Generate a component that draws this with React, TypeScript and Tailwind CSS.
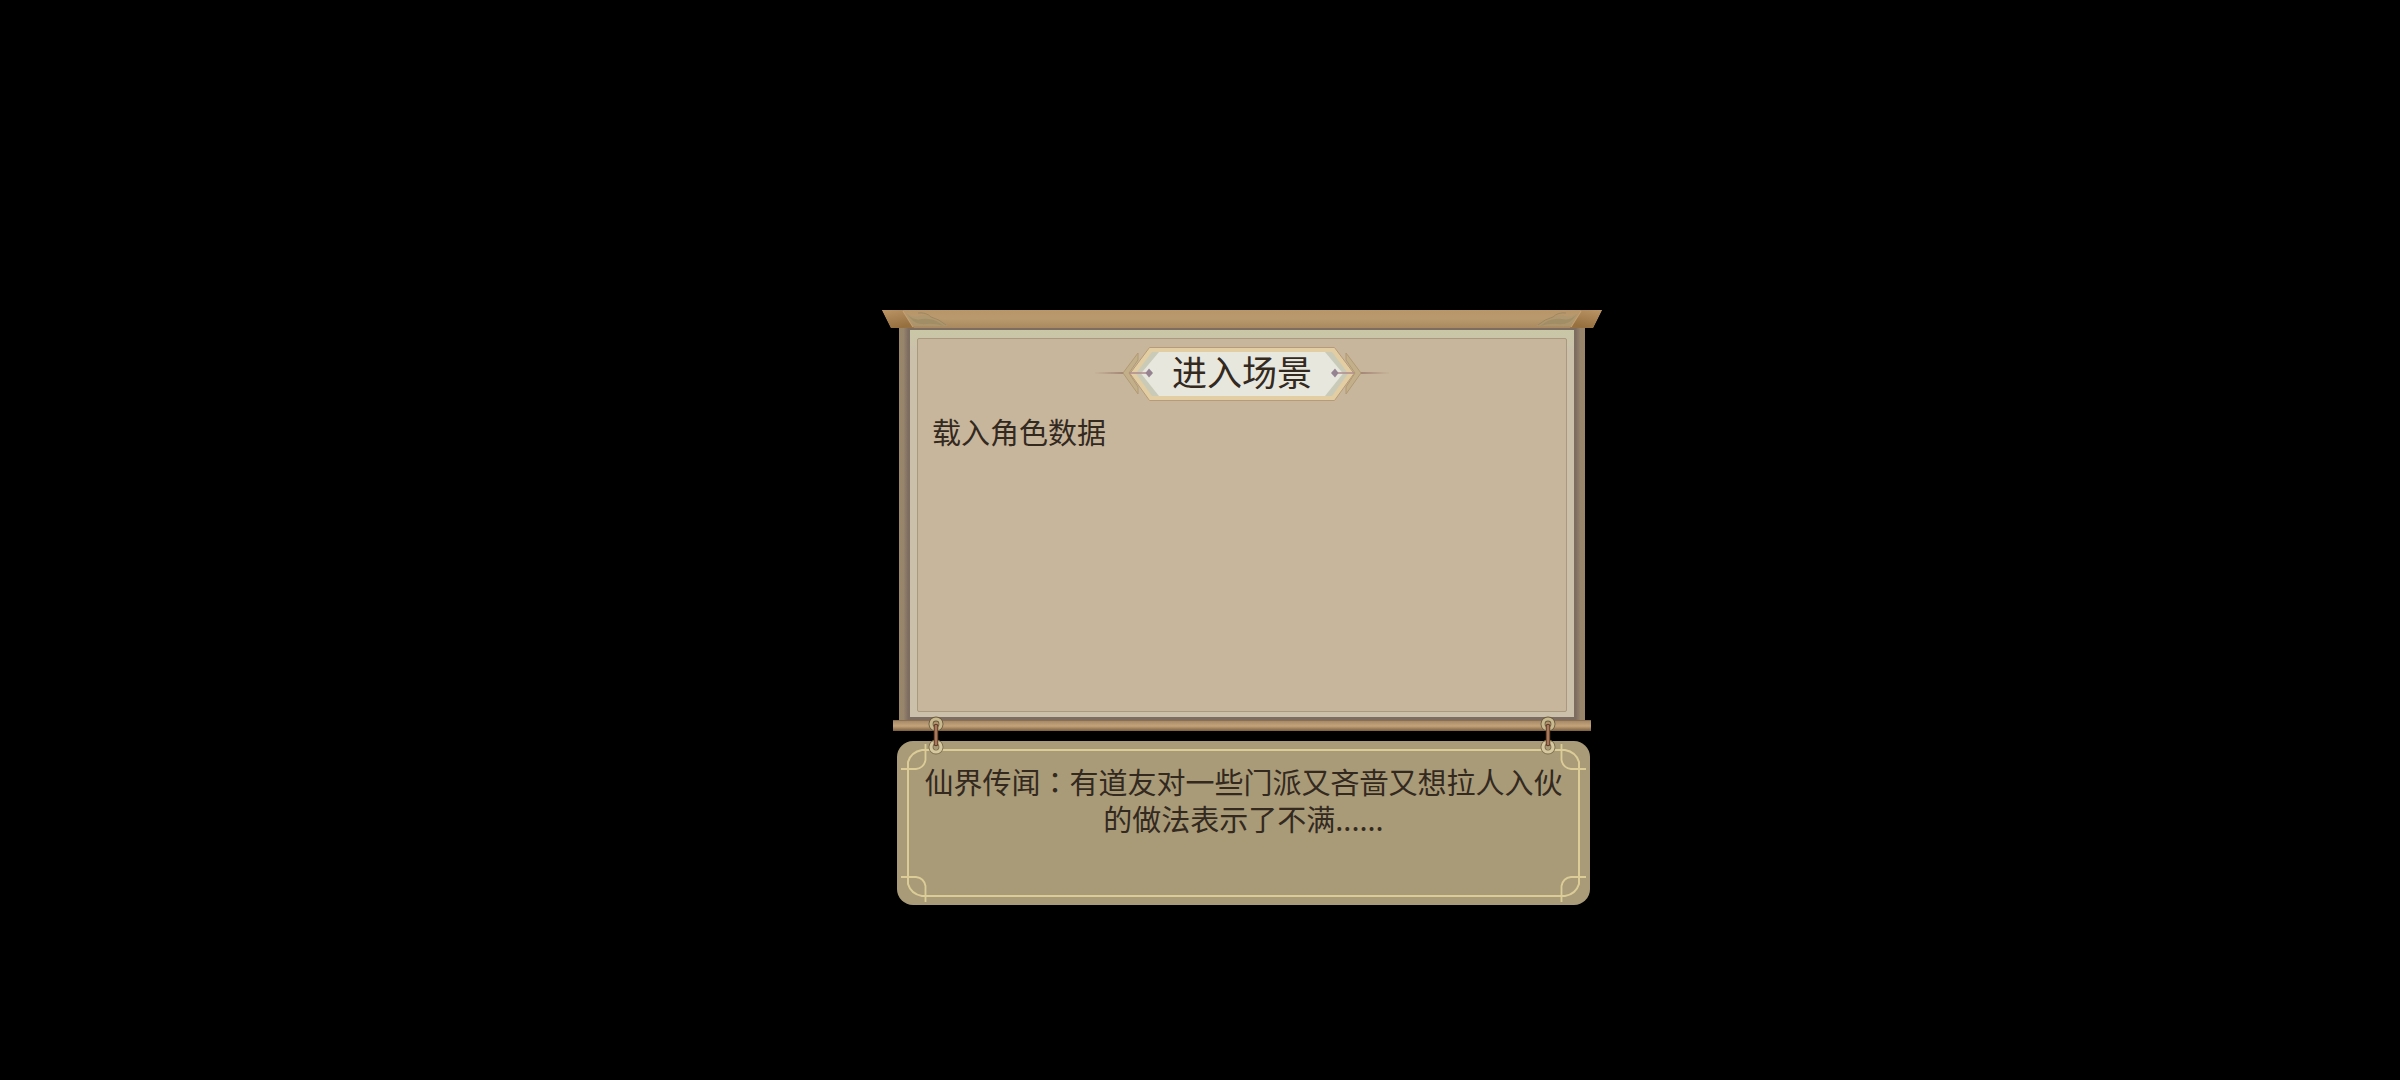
const tip = {
    label: '仙界传闻',
    text: '有道友对一些门派又吝啬又想拉人入伙的做法表示了不满......',
};

// Carved end of the roof beam, drawn for the left side
function BeamEnd({ className = '' }: { className?: string }) {
    return (
        <svg viewBox="0 0 72 18" className={`h-[18px] w-[72px] ${className}`} aria-hidden="true">
            <defs>
                <linearGradient id="wood" x1="0" y1="0" x2="0.4" y2="1">
                    <stop offset="0" stopColor="#bb9566" />
                    <stop offset="1" stopColor="#96703f" />
                </linearGradient>
            </defs>
            <path d="M22 1 Q29 9 38 6 Q44 4 50 8 Q59 11 66 16 L31 16 Z" fill="#ab9770" opacity="0.7" />
            <path d="M25 4 Q31 11 40 9 Q49 8 56 12 L62 16 Q52 13 44 14 Q34 15 29 9 Z" fill="#8f8159" opacity="0.4" />
            <path d="M36 3 Q44 2 49 7 Q57 9 64 15" fill="none" stroke="#93825b" strokeWidth="1" opacity="0.7" />
            <path d="M0 0 H21 L32 18 H9 Z" fill="url(#wood)" />
            <path d="M21 1 L31 17" stroke="#c3a175" strokeWidth="1.2" />
        </svg>
    );
}

// Frame corner of the tip card, drawn for the top left
function CardCorner({ className = '' }: { className?: string }) {
    return (
        <svg viewBox="0 0 30 30" className={`size-[30px] ${className}`} fill="none" stroke="#dccd98" strokeWidth="2" aria-hidden="true">
            <path d="M11 30 V21 Q14 11 25 9 H30" />
            <path d="M28.500 3 V19 Q27 27 19 28 H4" strokeWidth="1.8" />
        </svg>
    );
}

function Ring() {
    return (
        <svg viewBox="0 0 16 40" className="h-10 w-4" fill="none" aria-hidden="true">
            <circle cx="8" cy="8" r="5" stroke="#6b5c40" strokeWidth="5" />
            <circle cx="8" cy="8" r="5" stroke="#c8ba8e" strokeWidth="3.2" />
            <circle cx="8" cy="31" r="5" stroke="#7d6c4c" strokeWidth="5" />
            <circle cx="8" cy="31" r="5" stroke="#d6c99f" strokeWidth="3.2" />
            <path d="M8 10 V28" stroke="#5a3824" strokeWidth="4.500" strokeLinecap="round" />
            <path d="M8 10 V28" stroke="#a9785a" strokeWidth="2.6" strokeLinecap="round" />
        </svg>
    );
}

// One end of the title plate, drawn for the left side
function PlateEnd({ className = '' }: { className?: string }) {
    return (
        <svg viewBox="0 0 70 54" className={`h-[54px] w-[70px] shrink-0 ${className}`} fill="none" aria-hidden="true">
            <path d="M0 26 L36 25 V27 Z" fill="#9c7c70" />
            <path d="M44 6 L29 26 L44 47 V40 L35 26 L44 13 Z" fill="#c3af89" stroke="#b09a75" strokeWidth="1" />
            <path d="M70 0.500 H55.500 L36 26.500 L55.500 53.500 H70" fill="#e3cda2" stroke="#b79a78" strokeWidth="1" />
            <path d="M70 5 H58 L42 26.500 L58 49 H70 Z" fill="#c9cbb8" />
            <path d="M70 5 H65 L47 26.500 L65 49 H70 Z" fill="#e7e7de" />
            <path d="M36 26 H53" stroke="#b28f90" strokeWidth="1.6" />
            <path d="M55 21.500 L59 26 L55 30.500 L51.500 26 Z" fill="#958391" />
        </svg>
    );
}

export default function App() {
    return (
        <main className="flex min-h-screen items-center justify-center bg-black pt-[135px] pl-[84px] font-['Noto_Sans_CJK_SC',sans-serif] text-[#33291f]" lang="zh-CN">
            <div className="flex w-full max-w-[720px] flex-col">
                {/* Roof beam */}
                <div className="flex h-[18px] justify-between bg-linear-to-b from-[#b8966a] via-[#b8996d] to-[#a98a60] [clip-path:polygon(0_0,100%_0,calc(100%-9px)_100%,9px_100%)]">
                    <BeamEnd />
                    <BeamEnd className="-scale-x-100" />
                </div>

                {/* Board between its two posts */}
                <div className="mx-[17px] flex">
                    <div className="w-[9px] bg-linear-to-r from-[#9a8768] via-[#97856c] to-[#7f6d62]" />
                    <section className="flex-1 border-x-2 border-t-2 border-b-3 border-[#7d6c60] bg-linear-to-b from-[#c9c7a6] via-[#cbc1ab] via-5% to-[#cbc1ab] px-[7px] pt-2 pb-[5px]">
                        <div className="min-h-[374px] rounded-xs border border-[#a8997f] bg-[#c7b69b] px-[14px] pt-2">
                            <div className="flex items-center justify-center">
                                <PlateEnd />
                                <h1 className="h-[54px] border-y border-[#b79a78] bg-[#e7e7de] px-2 text-[35px] leading-[46px] whitespace-nowrap shadow-[inset_0_4px_0_#e3cda2,inset_0_-4px_0_#e3cda2]">进入场景</h1>
                                <PlateEnd className="-scale-x-100" />
                            </div>
                            <p className="mt-[10px] text-[29px] leading-[40px]">载入角色数据</p>
                        </div>
                    </section>
                    <div className="w-[9px] bg-linear-to-l from-[#9a8768] via-[#97856c] to-[#7f6d62]" />
                </div>

                {/* Lower rail, the rings lie over it and the card */}
                <div className="relative mx-[11px] h-[11px] border-t border-[#8a7050] bg-linear-to-b from-[#a68a68] via-[#c4a47a] to-[#7c5f40]">
                    <div className="absolute inset-x-[35px] -top-[5px] z-10 flex justify-between">
                        <Ring />
                        <Ring />
                    </div>
                </div>

                {/* Tip card */}
                <section className="relative mt-[10px] mr-3 ml-[15px] min-h-[164px] rounded-[16px] bg-[#a99b78] px-6 pt-[22px] pb-6">
                    <p className="text-center text-[29px] leading-[37px]">
                        {tip.label}
                        <span className="font-['Noto_Sans_CJK_TC',sans-serif]" lang="zh-TW">：</span>
                        {tip.text}
                    </p>
                    <div className="absolute inset-0 grid grid-cols-[30px_1fr_30px] grid-rows-[30px_1fr_30px]">
                        <CardCorner />
                        <span className="mt-2 h-[2px] bg-[#dccd98]" />
                        <CardCorner className="-scale-x-100" />
                        <span className="ml-[10px] w-[2px] bg-[#dccd98]" />
                        <span />
                        <span className="mr-[10px] w-[2px] justify-self-end bg-[#dccd98]" />
                        <CardCorner className="-scale-y-100" />
                        <span className="mb-2 h-[2px] self-end bg-[#dccd98]" />
                        <CardCorner className="-scale-100" />
                    </div>
                </section>
            </div>
        </main>
    );
}
